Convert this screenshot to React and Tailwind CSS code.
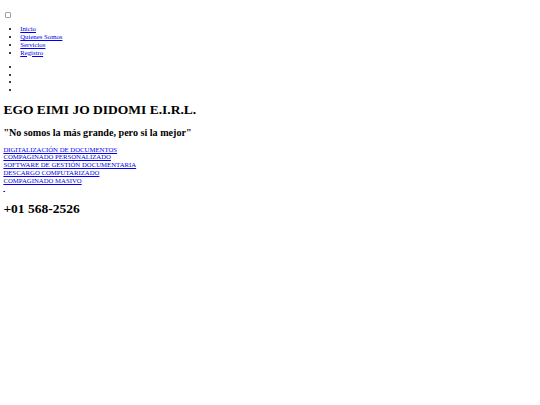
export default function App() {
  const nav = ["Inicio", "Quienes Somos", "Servicios", "Registro"];
  const services = [
    "DIGITALIZACIÓN DE DOCUMENTOS",
    "COMPAGINADO PERSONALIZADO",
    "SOFTWARE DE GESTIÓN DOCUMENTARIA",
    "DESCARGO COMPUTARIZADO",
    "COMPAGINADO MASIVO",
  ];
  return (
    <div className="min-h-[405px] w-[540px] bg-white p-[3.375px] font-['Liberation_Serif',serif] text-[6.75px] leading-[7.76px] text-black">
      <div className="ml-[1.7px] mt-[9px] h-[5.5px] w-[5.5px] rounded-[1px] border border-[#a3a3a3]" />
      <ul className="mt-[7.6px] list-disc pl-[16.875px]">
        {nav.map((n) => (
          <li key={n} className="h-[7.7px]">
            <a href="#" className="text-[#0000ee] underline">
              {n}
            </a>
          </li>
        ))}
      </ul>
      <ul className="mt-[6.75px] list-disc pl-[16.875px]">
        {[0, 1, 2, 3].map((i) => (
          <li key={i} className="h-[7.7px]">
            {"\u00a0"}
          </li>
        ))}
      </ul>
      <h1 className="mt-[8.6px] text-[13.5px] font-bold leading-[15.52px]">
        EGO EIMI JO DIDOMI E.I.R.L.
      </h1>
      <h2 className="mt-[9.05px] text-[10.125px] font-bold leading-[11.64px]">
        "No somos la más grande, pero si la mejor"
      </h2>
      <div className="mt-[7px] flex flex-col items-start">
        {services.map((s) => (
          <a key={s} href="#" className="h-[7.76px] text-[#0000ee] underline">
            {s}
          </a>
        ))}
        <a href="#" className="h-[7.76px] text-[#0000ee] underline">
          {"\u00a0"}
        </a>
      </div>
      <h1 className="mt-[8.5px] text-[13.5px] font-bold leading-[15.52px]">
        +01 568-2526
      </h1>
    </div>
  );
}
